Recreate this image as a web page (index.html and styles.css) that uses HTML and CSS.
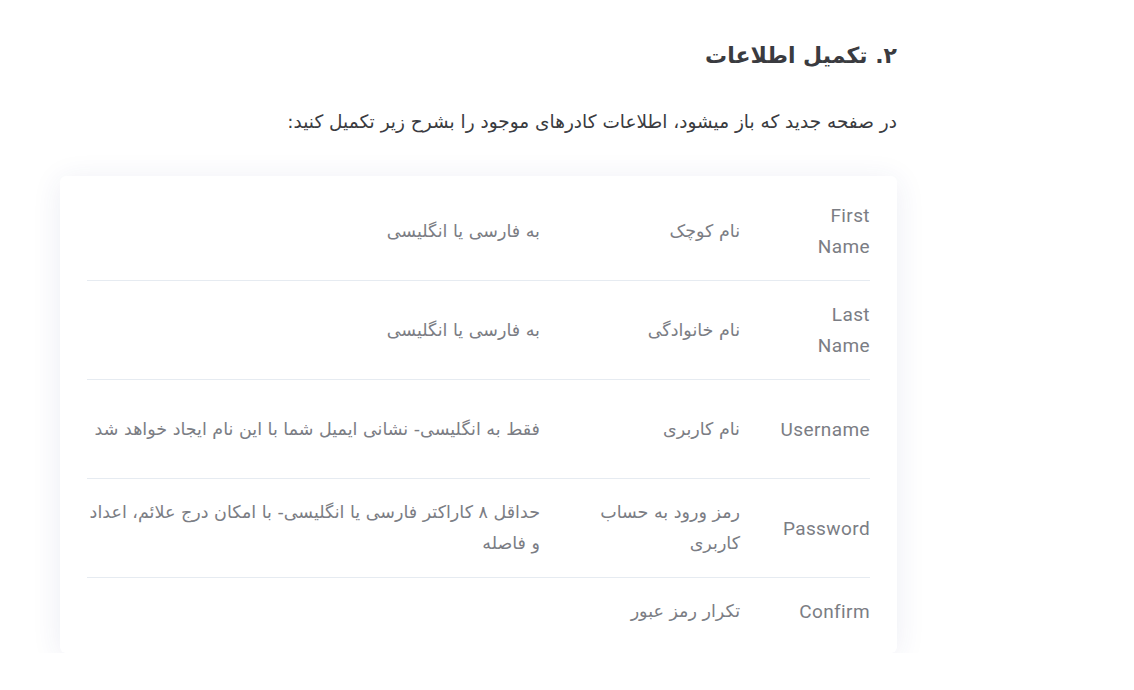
FILE: index.html
```html
<!DOCTYPE html>
<html lang="fa" dir="rtl">
<head>
<meta charset="utf-8">
<link rel="stylesheet" href="styles.css">
</head>
<body>
<main class="content">
  <h2 class="title">۲. تکمیل اطلاعات</h2>
  <p class="intro">در صفحه جدید که باز میشود، اطلاعات کادرهای موجود را بشرح زیر تکمیل کنید:</p>
  <div class="card">
    <div class="row">
      <div class="cell en">First Name</div>
      <div class="cell fa">نام کوچک</div>
      <div class="cell desc">به فارسی یا انگلیسی</div>
    </div>
    <div class="row">
      <div class="cell en">Last Name</div>
      <div class="cell fa">نام خانوادگی</div>
      <div class="cell desc">به فارسی یا انگلیسی</div>
    </div>
    <div class="row">
      <div class="cell en">Username</div>
      <div class="cell fa">نام کاربری</div>
      <div class="cell desc">فقط به انگلیسی- نشانی ایمیل شما با این نام ایجاد خواهد شد</div>
    </div>
    <div class="row">
      <div class="cell en">Password</div>
      <div class="cell fa">رمز ورود به حساب کاربری</div>
      <div class="cell desc">حداقل ۸ کاراکتر فارسی یا انگلیسی- با امکان درج علائم، اعداد و فاصله</div>
    </div>
    <div class="row row-last">
      <div class="cell en">Confirm</div>
      <div class="cell fa">تکرار رمز عبور</div>
      <div class="cell desc"></div>
    </div>
  </div>
</main>
</body>
</html>
```

FILE: styles.css
```css
html, body {
  margin: 0;
  padding: 0;
  background: #ffffff;
}
body {
  font-family: Roboto, "DejaVu Sans", sans-serif;
}
.content {
  width: 837px;
  margin: 0 auto 0 60px;
  padding-top: 38px;
  direction: rtl;
}
.title {
  margin: 0;
  font-family: "DejaVu Sans", sans-serif;
  font-size: 22px;
  line-height: 36px;
  font-weight: 700;
  color: #3a3b40;
}
.intro {
  margin: 34px 0 0;
  font-family: "DejaVu Sans", sans-serif;
  font-size: 18.5px;
  line-height: 28px;
  color: #3a3b40;
}
.card {
  margin-top: 40px;
  background: #fff;
  border-radius: 6px;
  box-shadow: 0 4px 30px rgba(40, 60, 130, 0.09);
  padding: 6px 27px 8px;
}
.row {
  display: grid;
  grid-template-columns: 110px 200px 1fr;
  align-items: center;
  border-bottom: 1px solid #e6ebf1;
  padding: 18px 0;
  min-height: 62px;
}
.row-last {
  border-bottom: none;
  min-height: 0;
}
.cell {
  font-size: 19px;
  line-height: 31px;
  color: #7b7d84;
}
.en {
  padding-left: 18px;
  text-align: right;
  letter-spacing: 0.4px;
}
.fa, .desc {
  padding-right: 20px;
  font-family: "DejaVu Sans", sans-serif;
  font-size: 17.5px;
}
```
